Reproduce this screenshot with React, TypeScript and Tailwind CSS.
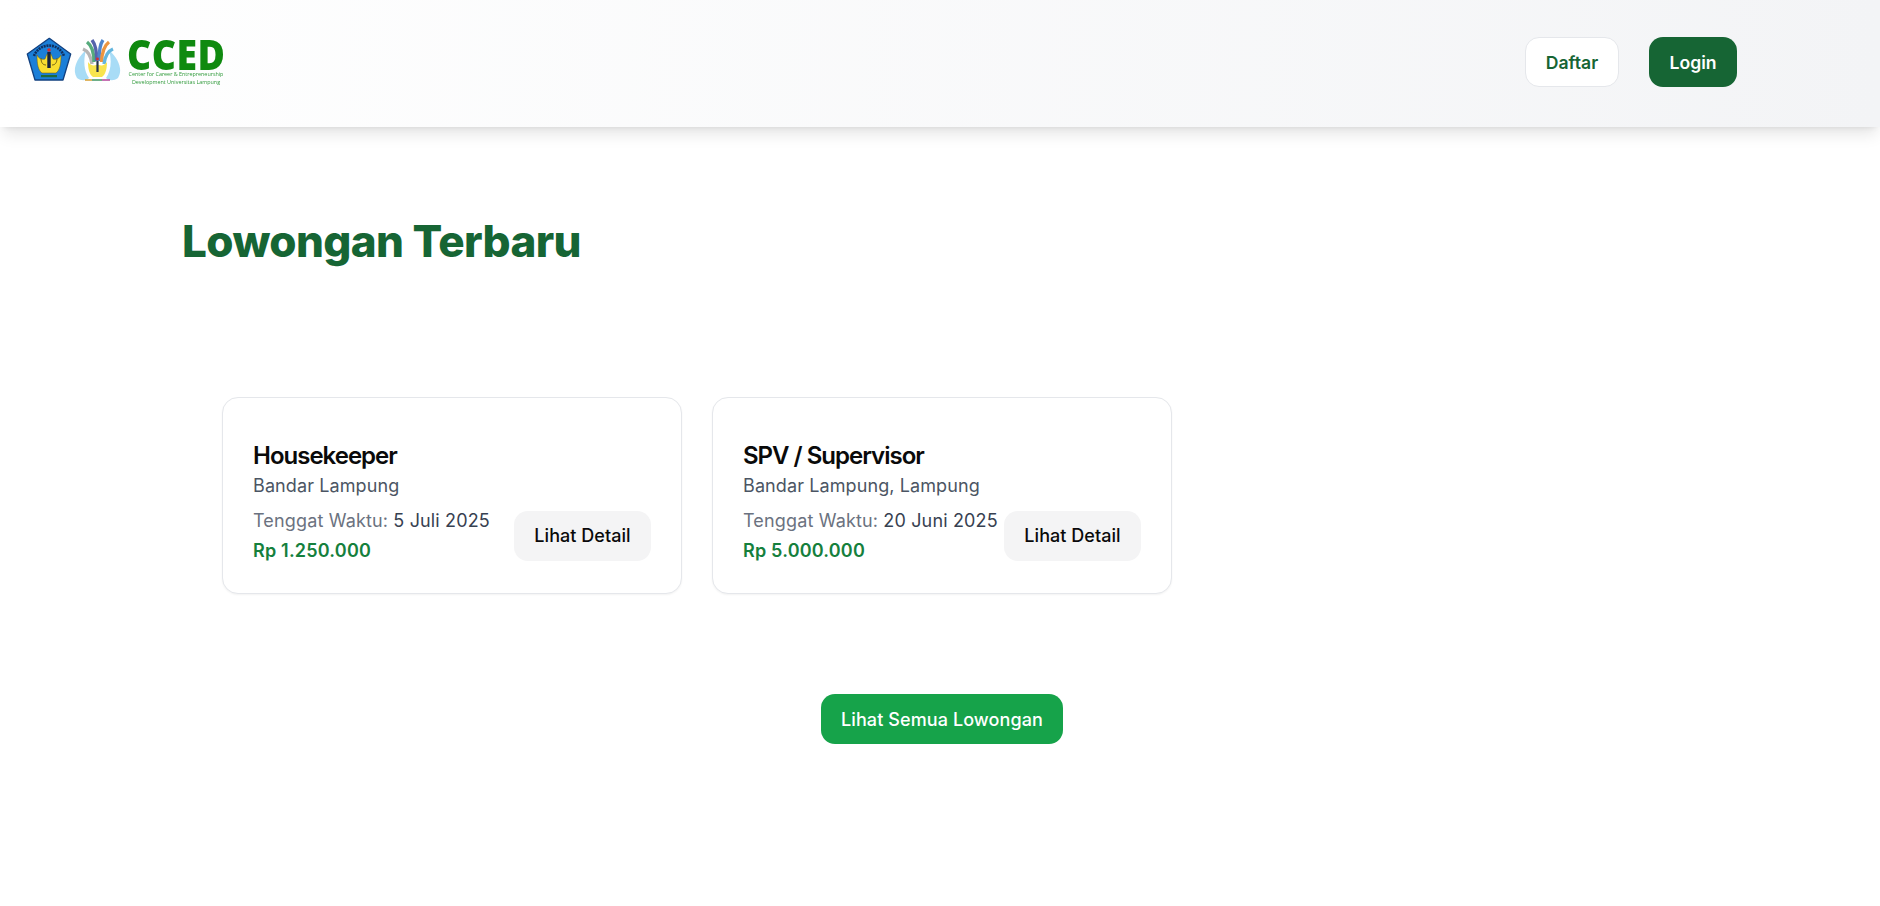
const jobs = [
  { title: "Housekeeper", place: "Bandar Lampung", deadline: "5 Juli 2025", salary: "Rp 1.250.000" },
  { title: "SPV / Supervisor", place: "Bandar Lampung, Lampung", deadline: "20 Juni 2025", salary: "Rp 5.000.000" },
];

function Emblems() {
  return (
    <svg width="96" height="50" viewBox="0 0 96 50" className="shrink-0 blur-[0.5px]">
      {/* Unila shield */}
      <path d="M23.3 1.3 L44.7 17 L37 43 H9 L1.3 17 Z" fill="#1b7fd8" stroke="#12407f" strokeWidth="1.3" strokeLinejoin="round" />
      <path d="M8 19 A16 16 0 0 1 38 19" fill="none" stroke="#10305f" strokeWidth="2.6" strokeDasharray="2 0.8" />
      <path d="M11 18 C11 27 12 33 16 36 H30 C34 33 35 27 35 18 C33 22 30 23 27 22 L25 17 H21 L19 22 C16 23 13 22 11 18 Z" fill="#f8de30" stroke="#6a5a12" strokeWidth="0.5" />
      <path d="M15 21 C15 26 17 28 20 28 M31 21 C31 26 29 28 26 28" fill="none" stroke="#6a5a12" strokeWidth="0.9" />
      <rect x="21.3" y="15" width="3.4" height="16" fill="#16233f" />
      <circle cx="23" cy="13" r="1.8" fill="#d92b2b" />
      <rect x="15" y="38" width="16" height="2.2" fill="#1e6a3a" />
      {/* CCED flame mark */}
      <path d="M60 13 C50 22 46 33 51 41 C55 44 60 44 63 41 C58 34 57 24 60 13 Z" fill="#a8dcf6" />
      <path d="M83 13 C93 22 97 33 92 41 C88 44 83 44 80 41 C85 34 86 24 83 13 Z" fill="#a8dcf6" />
      <g fill="none" strokeWidth="3.4" strokeLinecap="butt">
        <path d="M66 27 C65 19 62 14 57 12" stroke="#b5b5b5" />
        <path d="M68 25 C68 15 65 8 61 5" stroke="#56ab7c" />
        <path d="M70.5 24 C71 14 69 7 66 3" stroke="#5563ab" />
        <path d="M73 24 C73 14 74 7 77 3" stroke="#4f85cc" />
        <path d="M75.5 25 C76 15 79 8 83 5" stroke="#ec9540" />
        <path d="M78 27 C79 19 82 14 87 12" stroke="#63b5de" />
      </g>
      <path d="M62 25 C62 33 64 38 67 40 H76 C79 38 81 33 81 25 C79 28 76 29 73 28 H70 C67 29 64 28 62 25 Z" fill="#f8e44e" />
      <rect x="70.4" y="24" width="2.2" height="11" fill="#27324a" />
      <circle cx="71.5" cy="22" r="1.4" fill="#d92b2b" />
      <path d="M59 43 H66" stroke="#d8a23a" strokeWidth="1.6" />
      <path d="M66 43 H76" stroke="#4a9b6a" strokeWidth="1.6" />
      <path d="M76 43 H84" stroke="#b84fa0" strokeWidth="1.6" />
    </svg>
  );
}

function Logo() {
  return (
    <div className="mt-[1px] flex items-start gap-[6px] blur-[0.3px]">
      <Emblems />
      <div className="flex w-[96px] flex-col items-center font-['Open_Sans',sans-serif] text-[#0f8a0f]">
        <span className="inline-block h-[33px] scale-x-[0.89] text-[42px] leading-[33px] font-extrabold tracking-[0.5px]">CCED</span>
        <span className="text-[5.4px] leading-[8px] whitespace-nowrap text-[#2f9a3a]">Center for Career &amp; Entrepreneurship</span>
        <span className="text-[5.4px] leading-[8px] whitespace-nowrap text-[#2f9a3a]">Development Universitas Lampung</span>
      </div>
    </div>
  );
}

function JobCard({ job }: { job: (typeof jobs)[number] }) {
  return (
    <div className="flex h-[197px] w-[460px] flex-col rounded-[16px] border border-[#e5e7eb] bg-white pt-[42px] pr-[30px] pl-[30px] shadow-xs">
      <h3 className="text-[24px] leading-[32px] font-semibold tracking-[-1px] text-[#0a0a0a]">{job.title}</h3>
      <p className="mt-[1px] text-[18px] leading-[26px] tracking-[0.1px] text-[#4b5563]">{job.place}</p>
      <div className="mt-[6px] flex items-center justify-between">
        <div>
          <p className="text-[18px] leading-[31px] tracking-[0.15px] whitespace-nowrap text-[#6b7280]">
            Tenggat Waktu: <span className="text-[#374151]">{job.deadline}</span>
          </p>
          <p className="text-[18px] leading-[30px] font-semibold tracking-[0.2px] text-[#15803d]">{job.salary}</p>
        </div>
        <button className="h-[50px] w-[137px] shrink-0 rounded-[14px] bg-[#f4f4f5] text-[18px] font-medium tracking-[0.05px] text-[#0a0a0a]">
          Lihat Detail
        </button>
      </div>
    </div>
  );
}

export default function App() {
  return (
    <div className="min-h-[906px] bg-white font-['Inter',sans-serif]">
      <header className="flex h-[127px] items-center justify-between bg-gradient-to-r from-white to-[#f3f4f6] pr-[143px] pb-[4px] pl-[26px] shadow-lg">
        <Logo />
        <div className="flex items-center gap-[30px]">
          <button className="h-[50px] w-[94px] rounded-[14px] border border-[#e5e7eb] bg-white pt-[3px] text-[17.6px] font-semibold text-[#166534]">
            Daftar
          </button>
          <button className="h-[50px] w-[88px] rounded-[14px] bg-[#166534] pt-[3px] text-[17.6px] font-semibold text-white">
            Login
          </button>
        </div>
      </header>

      <main className="pl-[182px]">
        <h2 className="pt-[88px] text-[44px] leading-[53px] font-extrabold tracking-[-0.6px] text-[#166534]">Lowongan Terbaru</h2>
        <div className="mt-[129px] flex gap-[30px] pl-[40px]">
          {jobs.map((job) => (
            <JobCard key={job.title} job={job} />
          ))}
        </div>
        <div className="mt-[100px] flex w-[1520px] justify-center">
          <button className="h-[50px] w-[242px] rounded-[14px] bg-[#16a34a] text-[18px] font-medium tracking-[0.1px] text-white">
            Lihat Semua Lowongan
          </button>
        </div>
      </main>
    </div>
  );
}
